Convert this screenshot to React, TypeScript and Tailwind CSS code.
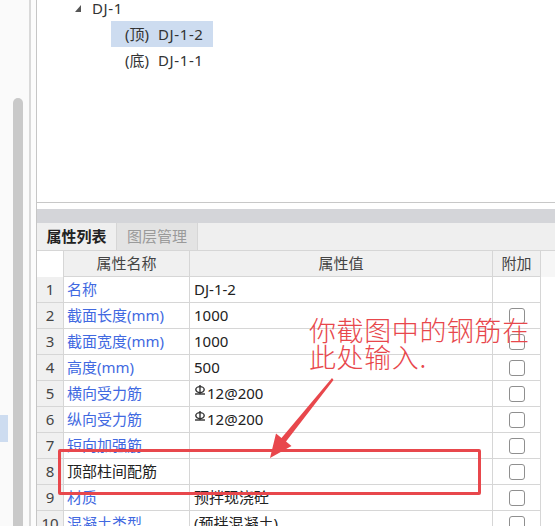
import React from "react"

type Row = {
  n: number
  name: string
  value?: React.ReactNode
  plain?: boolean
  check?: boolean
}

// small HRB400 rebar glyph drawn before the spacing value
function Rebar() {
  return (
    <svg width="12" height="11" viewBox="0 0 12 11" className="mr-px -mt-[6px] shrink-0 text-[#333]">
      <ellipse cx="6" cy="4.6" rx="4.2" ry="3" fill="none" stroke="currentColor" strokeWidth="1.4" />
      <line x1="6" y1="0" x2="6" y2="9" stroke="currentColor" strokeWidth="1.4" />
      <line x1="1" y1="9" x2="11" y2="9" stroke="currentColor" strokeWidth="1.4" />
    </svg>
  )
}

const rebar = (
  <span className="flex items-center">
    <Rebar />
    12@200
  </span>
)

const rows: Row[] = [
  { n: 1, name: "名称", value: "DJ-1-2", check: false },
  { n: 2, name: "截面长度(mm)", value: "1000", check: true },
  { n: 3, name: "截面宽度(mm)", value: "1000", check: true },
  { n: 4, name: "高度(mm)", value: "500", check: true },
  { n: 5, name: "横向受力筋", value: rebar, check: true },
  { n: 6, name: "纵向受力筋", value: rebar, check: true },
  { n: 7, name: "短向加强筋", value: "", check: true },
  { n: 8, name: "顶部柱间配筋", value: "", plain: true, check: true },
  { n: 9, name: "材质", value: "预拌现浇砼", check: true },
  { n: 10, name: "混凝土类型", value: "(预拌混凝土)", check: true },
]

function Checkbox() {
  return <span className="block h-[16px] w-[16px] rounded-[3px] border-[1.5px] border-[#8f8f8f] bg-white" />
}

function TreeLeaf({ tag, label, active }: { tag: string; label: string; active?: boolean }) {
  return (
    <div
      className={
        "ml-[74px] flex h-[26px] w-[102px] items-center pl-[14px] " + (active ? "bg-[#cddcf0]" : "")
      }
    >
      <span className="mr-[9px]">({tag})</span>
      <span className="tracking-[0.6px]">{label}</span>
    </div>
  )
}

export default function App() {
  return (
    <div className="relative flex h-[526px] w-[555px] overflow-hidden bg-white font-['Noto_Sans','Noto_Sans_CJK_SC',sans-serif] text-[15px] text-[#333]">
      {/* left dock strip with its scrollbar */}
      <aside className="flex w-[29px] shrink-0 bg-[#fafafa]">
        <div className="w-[8px] pt-[415px]">
          <div className="h-[27px] bg-[#cddcf0]" />
        </div>
        <div className="ml-[5px] flex w-[10px] flex-col pt-[98px]">
          <div className="flex-1 rounded-t-full bg-[#c9c9c9]" />
        </div>
      </aside>
      <div className="w-[2px] shrink-0 bg-[#d9d9d9]" />
      <div className="w-[5px] shrink-0 bg-[#fcfcfc]" />

      <main className="flex min-w-0 flex-1 flex-col border-l border-[#c6c6c6]">
        {/* tree */}
        <section className="h-[203px] shrink-0 overflow-hidden border-b border-[#c8c8c8] bg-white">
          <div className="-mt-[5px] leading-[26px]">
            <div className="flex h-[26px] items-center pl-[38px]">
              <svg width="6" height="7" viewBox="0 0 6 7" className="mr-[11px]">
                <path d="M6 0 L6 7 L0 7 Z" fill="#555" />
              </svg>
              <span className="tracking-[0.6px]">DJ-1</span>
            </div>
            <TreeLeaf tag="顶" label="DJ-1-2" active />
            <TreeLeaf tag="底" label="DJ-1-1" />
          </div>
        </section>
        <div className="h-[6px] shrink-0 bg-white" />
        <div className="h-[14px] shrink-0 bg-[#d4d5d9]" />

        {/* tabs */}
        <div className="flex h-[28px] shrink-0 border-b border-[#d6d6d6] bg-[#efefef]">
          <div className="flex w-[80px] items-center justify-center border-r border-[#d6d6d6] font-semibold text-[#222]">
            属性列表
          </div>
          <div className="flex w-[81px] items-center justify-center border-r border-[#d6d6d6] bg-[#e3e3e3] text-[#9a9a9a]">
            图层管理
          </div>
        </div>

        {/* property table */}
        <div className="flex-1">
          <div className="flex h-[26px] text-[#444]">
            <div className="w-[27px] border-r border-[#d6d6d6] bg-white" />
            <div className="flex w-[126px] items-center justify-center border-r border-b border-[#d6d6d6] bg-[#f0f0f0]">属性名称</div>
            <div className="flex w-[303px] items-center justify-center border-r border-b border-[#d6d6d6] bg-[#f0f0f0]">属性值</div>
            <div className="flex w-[48px] items-center justify-center border-r border-b border-[#d6d6d6] bg-[#f0f0f0]">附加</div>
            <div className="flex-1 bg-[#f6f6f6]" />
          </div>
          {rows.map((r) => (
            <div key={r.n} className="flex h-[26px]">
              <div className="flex w-[27px] items-center justify-center border-r border-b border-[#d6d6d6] bg-[#f0f0f0] text-[#444]">
                {r.n}
              </div>
              <div
                className={
                  "flex w-[126px] items-center whitespace-nowrap border-r border-b border-[#d6d6d6] pl-[3px] " +
                  (r.plain ? "text-[#222]" : "text-[#4169e1]")
                }
              >
                {r.name}
              </div>
              <div className="flex w-[303px] items-center whitespace-nowrap border-r border-b border-[#d6d6d6] pl-[4px] text-[#222]">
                {r.value}
              </div>
              <div className="flex w-[48px] items-center justify-center border-r border-b border-[#d6d6d6]">
                {r.check && <Checkbox />}
              </div>
              <div className="flex-1" />
            </div>
          ))}
        </div>
      </main>

      {/* red annotation laid over the screenshot */}
      <div className="pointer-events-none absolute left-[309px] top-[316px] font-['Noto_Sans_CJK_SC',sans-serif] text-[27px] font-extralight leading-[27px] tracking-[0.6px] text-[#e8474c]">
        <div>你截图中的钢筋在</div>
        <div>此处输入.</div>
      </div>
      <svg className="pointer-events-none absolute left-0 top-0" width="555" height="526" viewBox="0 0 555 526">
        <polygon
          points="332,378 333.5,380 286,441.5 291.5,446 270,458 276,433.5 281.5,438"
          fill="#e8474c"
        />
      </svg>
      <div className="pointer-events-none absolute left-[58px] top-[449px] h-[46px] w-[423px] rounded-[2px] border-[3px] border-[#e8474c]" />
    </div>
  )
}
